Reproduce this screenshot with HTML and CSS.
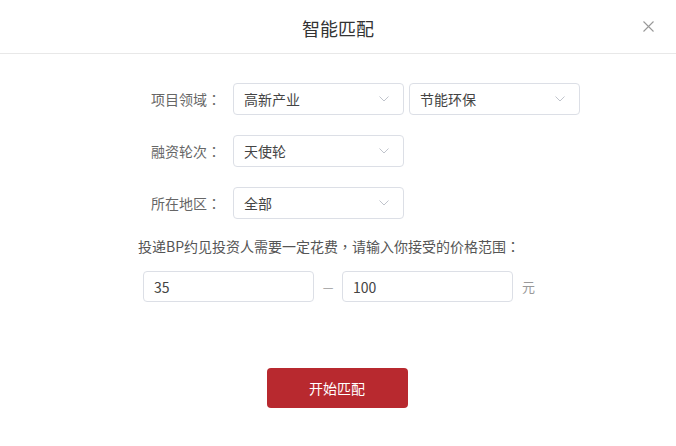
FILE: index.html
```html
<!DOCTYPE html>
<html lang="zh">
<head>
<meta charset="utf-8">
<title>智能匹配</title>
<link rel="stylesheet" href="styles.css">
</head>
<body>
<div class="dialog">
  <div class="header">
    <span class="title">智能匹配</span>
    <span class="close">
      <svg width="11" height="11" viewBox="0 0 11 11"><path d="M0.5 0.5L10.5 10.5M10.5 0.5L0.5 10.5" stroke="#999" stroke-width="1.1" fill="none"/></svg>
    </span>
  </div>
  <div class="form">
    <div class="row">
      <label class="label">项目领域<span class="punct" lang="zh-TW">：</span></label>
      <div class="select"><span>高新产业</span><svg class="arrow" width="10" height="6" viewBox="0 0 10 6"><path d="M0.5 0.5L5 5L9.5 0.5" stroke="#c0c4cc" stroke-width="1" fill="none"/></svg></div>
      <div class="select"><span>节能环保</span><svg class="arrow" width="10" height="6" viewBox="0 0 10 6"><path d="M0.5 0.5L5 5L9.5 0.5" stroke="#c0c4cc" stroke-width="1" fill="none"/></svg></div>
    </div>
    <div class="row">
      <label class="label">融资轮次<span class="punct" lang="zh-TW">：</span></label>
      <div class="select"><span>天使轮</span><svg class="arrow" width="10" height="6" viewBox="0 0 10 6"><path d="M0.5 0.5L5 5L9.5 0.5" stroke="#c0c4cc" stroke-width="1" fill="none"/></svg></div>
    </div>
    <div class="row">
      <label class="label">所在地区<span class="punct" lang="zh-TW">：</span></label>
      <div class="select"><span>全部</span><svg class="arrow" width="10" height="6" viewBox="0 0 10 6"><path d="M0.5 0.5L5 5L9.5 0.5" stroke="#c0c4cc" stroke-width="1" fill="none"/></svg></div>
    </div>
    <p class="note">投递BP约见投资人需要一定花费<span class="punct" lang="zh-TW">，</span>请输入你接受的价格范围<span class="punct" lang="zh-TW">：</span></p>
    <div class="price">
      <div class="input">35</div>
      <span class="dash">—</span>
      <div class="input">100</div>
      <span class="unit">元</span>
    </div>
  </div>
  <div class="actions">
    <button class="btn">开始匹配</button>
  </div>
</div>
</body>
</html>
```
FILE: styles.css
```css
html, body {
  margin: 0;
  padding: 0;
  background: #fff;
}
body {
  font-family: "Noto Sans CJK SC", "Liberation Sans", sans-serif;
  font-size: 14px;
  color: #333;
}
.dialog {
  width: 676px;
  height: 446px;
}
.header {
  height: 53px;
  border-bottom: 1px solid #e8e8e8;
  display: flex;
  align-items: center;
  justify-content: center;
  position: relative;
}
.title {
  font-size: 18px;
  color: #333;
  line-height: 24px;
  margin-top: 2px;
}
.close {
  position: absolute;
  right: 22px;
  top: 21px;
  width: 11px;
  height: 11px;
  display: flex;
}
.punct {
  font-family: "Noto Sans CJK TC", "Noto Sans CJK SC", sans-serif;
}
.form {
  padding: 29px 0 0 138px;
}
.row {
  display: flex;
  align-items: center;
  gap: 5px;
  margin-bottom: 20px;
}
.row .label {
  width: 95px;
  margin-right: -5px;
  box-sizing: border-box;
  padding-right: 12px;
  text-align: right;
  color: #666;
  line-height: 20px;
}
.select {
  width: 171px;
  height: 32px;
  box-sizing: border-box;
  border: 1px solid #dcdfe6;
  border-radius: 4px;
  display: flex;
  align-items: center;
  justify-content: space-between;
  padding: 0 14px 0 10px;
  color: #444;
}
.arrow {
  display: block;
}
.note {
  margin: -3px 0 0 0;
  line-height: 20px;
  color: #555;
}
.price {
  display: flex;
  align-items: center;
  margin: 15px 0 0 5px;
}
.input {
  width: 171px;
  height: 31px;
  box-sizing: border-box;
  border: 1px solid #dcdfe6;
  border-radius: 4px;
  padding: 0 10px;
  display: flex;
  align-items: center;
  color: #444;
}
.dash {
  width: 28px;
  text-align: center;
  color: #999;
  font-size: 12px;
}
.unit {
  margin-left: 9px;
  color: #999;
  font-size: 13px;
}
.actions {
  display: flex;
  justify-content: center;
  margin-top: 66px;
}
.btn {
  width: 141px;
  height: 40px;
  background: #b8292f;
  color: #fff;
  border: none;
  border-radius: 4px;
  font-family: "Noto Sans CJK SC", "Liberation Sans", sans-serif;
  font-size: 14px;
  padding: 0;
  margin-left: -2px;
}
```
